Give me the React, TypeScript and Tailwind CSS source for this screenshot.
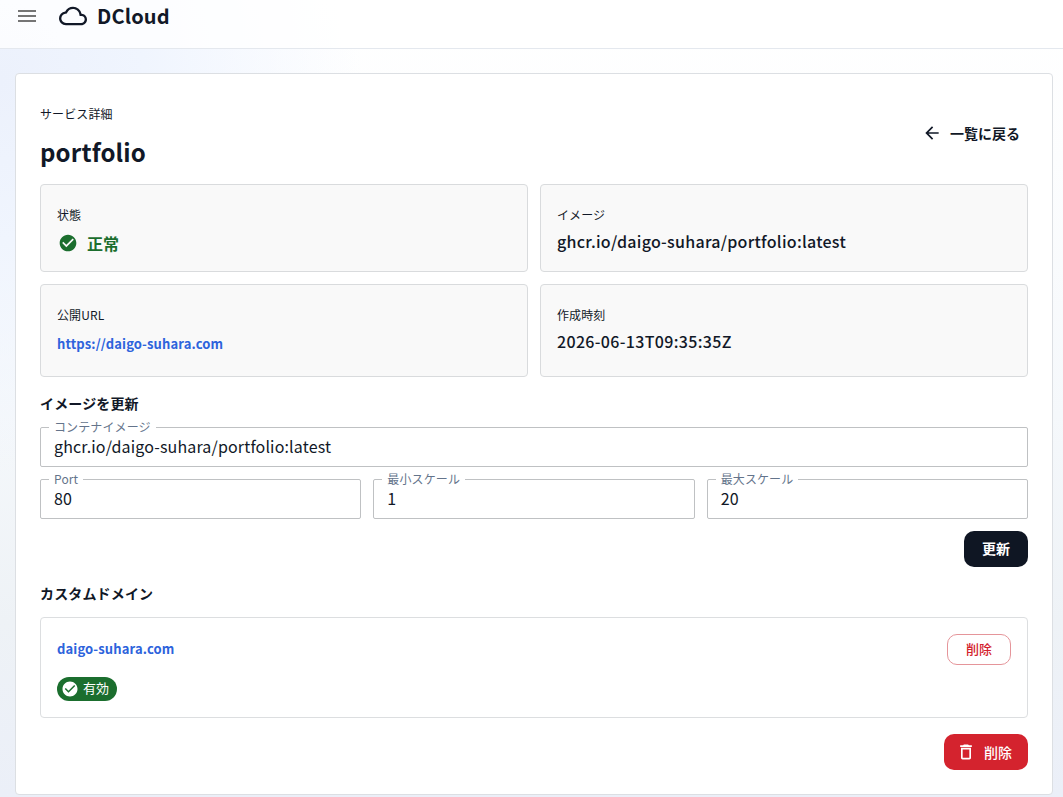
import React from "react";
import { MdMenu, MdOutlineCloud, MdCheckCircle, MdArrowBack, MdDeleteOutline } from "react-icons/md";

function InfoCard({ label, children, className }: { label: string; children: React.ReactNode; className: string }) {
  return (
    <div className={`flex flex-col rounded border border-[#d9dbdd] bg-[#f9f9f9] px-4 pt-5 ${className}`}>
      <div className="text-xs leading-5 tracking-[0.1px]">{label}</div>
      {children}
    </div>
  );
}

function Field({ label, value }: { label: string; value: string }) {
  return (
    <div className="relative flex h-10 min-w-0 flex-1 items-center rounded-xs border border-[#bfc1c3] px-[13px] pb-0.5 text-base">
      <span className="absolute -top-[10px] left-2 bg-white px-[5px] text-xs leading-[18px] tracking-[0.11px] text-[#64748b]">{label}</span>
      <span className="leading-6 tracking-[0.15px]">{value}</span>
    </div>
  );
}

export default function App() {
  return (
    <div
      lang="ja"
      className="flex h-[797px] flex-col overflow-hidden bg-[radial-gradient(ellipse_360px_400px_at_0px_80px,#ecf1fc_0%,#f0f5fe_40%,transparent_100%),linear-gradient(180deg,#ffffff_0%,#fcfdfe_20%,#f5f8fb_52%,#eef2f6_78%,#ebeff8_100%)] font-['Noto_Sans_CJK_JP',sans-serif] text-[#111827]"
    >
      <header className="flex h-[49px] shrink-0 items-start border-b border-[#e4e8ee] bg-white/80 pl-[15px]">
        <MdMenu className="mt-1 size-6 text-[#757575]" />
        <MdOutlineCloud className="mt-0.5 ml-5 size-7" />
        <span className="ml-[10px] text-xl leading-8 font-bold tracking-[0.15px]">DCloud</span>
      </header>
      <main className="mt-6 mr-[10px] ml-[15px] flex h-[722px] flex-col rounded border border-[#dcdfe3] bg-white px-6">
        <div className="flex h-[110px] shrink-0 items-start justify-between">
          <div className="pt-[30px]">
            <div className="text-xs leading-5 tracking-[0.1px]">サービス詳細</div>
            <h1 className="mt-[10px] text-2xl leading-9 font-bold tracking-[0.15px]">portfolio</h1>
          </div>
          <button className="mt-[45px] mr-2 flex h-7 items-center text-sm font-bold">
            <MdArrowBack className="mr-2 size-5" />
            一覧に戻る
          </button>
        </div>
        <div className="grid grid-cols-2 gap-3">
          <InfoCard label="状態" className="h-[88px]">
            <div className="mt-0.5 flex h-8 items-center text-[#1b6e2e]">
              <MdCheckCircle className="mr-[9px] ml-px size-5" />
              <span className="text-base font-bold">正常</span>
            </div>
          </InfoCard>
          <InfoCard label="イメージ" className="h-[88px]">
            <div className="mt-1 text-base leading-6 font-medium tracking-[0.27px]">ghcr.io/daigo-suhara/portfolio:latest</div>
          </InfoCard>
          <InfoCard label="公開URL" className="h-[93px]">
            <a className="mt-[9px] text-[13px] leading-5 font-bold tracking-[0.13px] text-[#2d63dc]">https://daigo-suhara.com</a>
          </InfoCard>
          <InfoCard label="作成時刻" className="h-[93px]">
            <div className="mt-1 text-base leading-6 font-medium tracking-[0.33px]">2026-06-13T09:35:35Z</div>
          </InfoCard>
        </div>
        <h2 className="mt-[15px] text-sm leading-[22px] font-bold tracking-[0.15px]">イメージを更新</h2>
        <div className="mt-[13px] flex">
          <Field label="コンテナイメージ" value="ghcr.io/daigo-suhara/portfolio:latest" />
        </div>
        <div className="mt-3 flex gap-3">
          <Field label="Port" value="80" />
          <Field label="最小スケール" value="1" />
          <Field label="最大スケール" value="20" />
        </div>
        <button className="mt-3 flex h-9 w-16 shrink-0 items-center justify-center self-end rounded-[10px] bg-[#0f1623] pb-0.5 text-sm font-bold text-white">
          更新
        </button>
        <h2 className="mt-[15px] text-sm leading-[22px] font-bold tracking-[0.15px]">カスタムドメイン</h2>
        <section className="mt-[13px] flex h-[101px] shrink-0 items-start justify-between rounded border border-[#dcdee0] p-4">
          <div>
            <a className="block text-[13px] leading-[30px] font-bold tracking-[0.13px] text-[#2d63dc]">daigo-suhara.com</a>
            <div className="mt-[13px] flex h-6 w-15 items-center rounded-full bg-[#1b6e2e] pl-1 text-[13px] text-white">
              <MdCheckCircle className="mr-1 size-[18px]" />
              <span className="pb-0.5">有効</span>
            </div>
          </div>
          <button className="flex h-[31px] w-16 items-center justify-center rounded-[10px] border border-[#e5959a] pb-0.5 text-[13px] font-medium text-[#d3212c]">
            削除
          </button>
        </section>
        <button className="mt-4 flex h-9 w-[84px] shrink-0 items-center self-end rounded-[10px] bg-[#d4232e] pl-3 text-sm font-medium text-white">
          <MdDeleteOutline className="mr-2 size-5" />
          削除
        </button>
      </main>
    </div>
  );
}
